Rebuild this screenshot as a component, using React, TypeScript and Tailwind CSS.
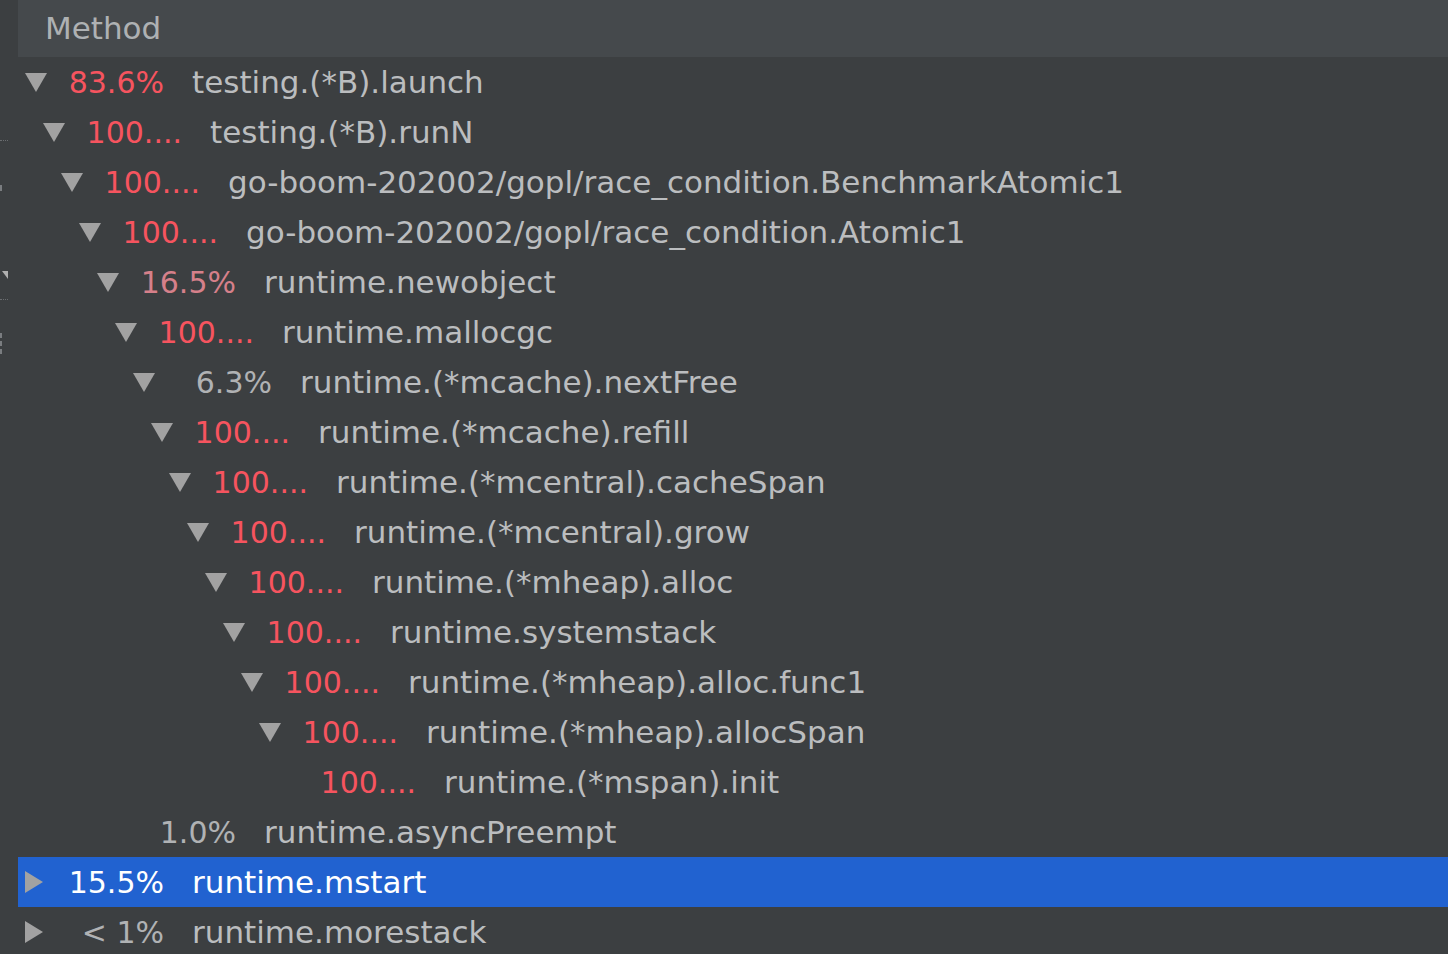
import React from "react";

type Row = { level: number; pct: string; name: string; kind: "open" | "closed" | "leaf"; tone: "red" | "pink" | "gray"; selected?: boolean };

const rows: Row[] = [
  { level: 0, pct: "83.6%", name: "testing.(*B).launch", kind: "open", tone: "red" },
  { level: 1, pct: "100....", name: "testing.(*B).runN", kind: "open", tone: "red" },
  { level: 2, pct: "100....", name: "go-boom-202002/gopl/race_condition.BenchmarkAtomic1", kind: "open", tone: "red" },
  { level: 3, pct: "100....", name: "go-boom-202002/gopl/race_condition.Atomic1", kind: "open", tone: "red" },
  { level: 4, pct: "16.5%", name: "runtime.newobject", kind: "open", tone: "pink" },
  { level: 5, pct: "100....", name: "runtime.mallocgc", kind: "open", tone: "red" },
  { level: 6, pct: "6.3%", name: "runtime.(*mcache).nextFree", kind: "open", tone: "gray" },
  { level: 7, pct: "100....", name: "runtime.(*mcache).refill", kind: "open", tone: "red" },
  { level: 8, pct: "100....", name: "runtime.(*mcentral).cacheSpan", kind: "open", tone: "red" },
  { level: 9, pct: "100....", name: "runtime.(*mcentral).grow", kind: "open", tone: "red" },
  { level: 10, pct: "100....", name: "runtime.(*mheap).alloc", kind: "open", tone: "red" },
  { level: 11, pct: "100....", name: "runtime.systemstack", kind: "open", tone: "red" },
  { level: 12, pct: "100....", name: "runtime.(*mheap).alloc.func1", kind: "open", tone: "red" },
  { level: 13, pct: "100....", name: "runtime.(*mheap).allocSpan", kind: "open", tone: "red" },
  { level: 14, pct: "100....", name: "runtime.(*mspan).init", kind: "leaf", tone: "red" },
  { level: 4, pct: "1.0%", name: "runtime.asyncPreempt", kind: "leaf", tone: "gray" },
  { level: 0, pct: "15.5%", name: "runtime.mstart", kind: "closed", tone: "gray", selected: true },
  { level: 0, pct: "< 1%", name: "runtime.morestack", kind: "closed", tone: "gray" },
];

function Tri({ kind }: { kind: Row["kind"] }) {
  if (kind === "leaf") return <span className="w-[22px] shrink-0" />;
  if (kind === "open")
    return (
      <svg width="22" height="20" viewBox="0 0 22 20" className="shrink-0">
        <polygon points="0,1 22,1 11,20" fill="#a2a2a2" />
      </svg>
    );
  return (
    <svg width="22" height="22" viewBox="0 0 22 22" className="shrink-0">
      <polygon points="0,0 18,11 0,22" fill="#a2a2a2" />
    </svg>
  );
}

export default function App() {
  return (
    <div
      className="w-[1448px] h-[954px] overflow-hidden bg-[#3c3f41] flex"
      style={{ fontFamily: '"DejaVu Sans", "Liberation Sans", sans-serif' }}
    >
      <div className="w-[18px] shrink-0 bg-[#3c3f41] flex flex-col">
        <div className="h-[140px]" />
        <div className="h-[1px] w-[8px] border-t border-dotted border-[#6a6d70]" />
        <div className="h-[44px]" />
        <div className="h-[6px] w-[2px] bg-[#7a7d80]" />
        <div className="h-[80px]" />
        <div className="h-0 w-0 border-l-[6px] border-r-[0px] border-t-[8px] border-l-transparent border-t-[#b0b0b0] ml-[2px]" />
        <div className="h-[20px]" />
        <div className="h-[1px] w-[8px] border-t border-dotted border-[#6a6d70]" />
        <div className="h-[33px]" />
        <div className="flex flex-col gap-[3px]">
          <div className="h-[5px] w-[2px] bg-[#7a7d80]" />
          <div className="h-[5px] w-[2px] bg-[#7a7d80]" />
          <div className="h-[5px] w-[2px] bg-[#7a7d80]" />
        </div>
      </div>
      <div className="flex-1 flex flex-col">
        <div className="h-[57px] bg-[#45494c] flex items-center pl-[27px] text-[31px] text-[#aeb1b3] shrink-0">
          Method
        </div>
        {rows.map((r, i) => (
          <div
            key={i}
            className={`h-[50px] flex items-center shrink-0 ${r.selected ? "bg-[#2162d0]" : ""}`}
            style={{ paddingLeft: 7 + r.level * 18 }}
          >
            <Tri kind={r.kind} />
            <span
              className={`w-[117px] text-right shrink-0 text-[30px] ${
                r.selected
                  ? "text-white"
                  : r.tone === "red"
                  ? "text-[#f6545f]"
                  : r.tone === "pink"
                  ? "text-[#d6808a]"
                  : "text-[#b0b2b4]"
              }`}
            >
              {r.pct}
            </span>
            <span className={`ml-[28px] text-[31px] whitespace-nowrap ${r.selected ? "text-white" : "text-[#bbbdbf]"}`}>
              {r.name}
            </span>
          </div>
        ))}
      </div>
    </div>
  );
}
